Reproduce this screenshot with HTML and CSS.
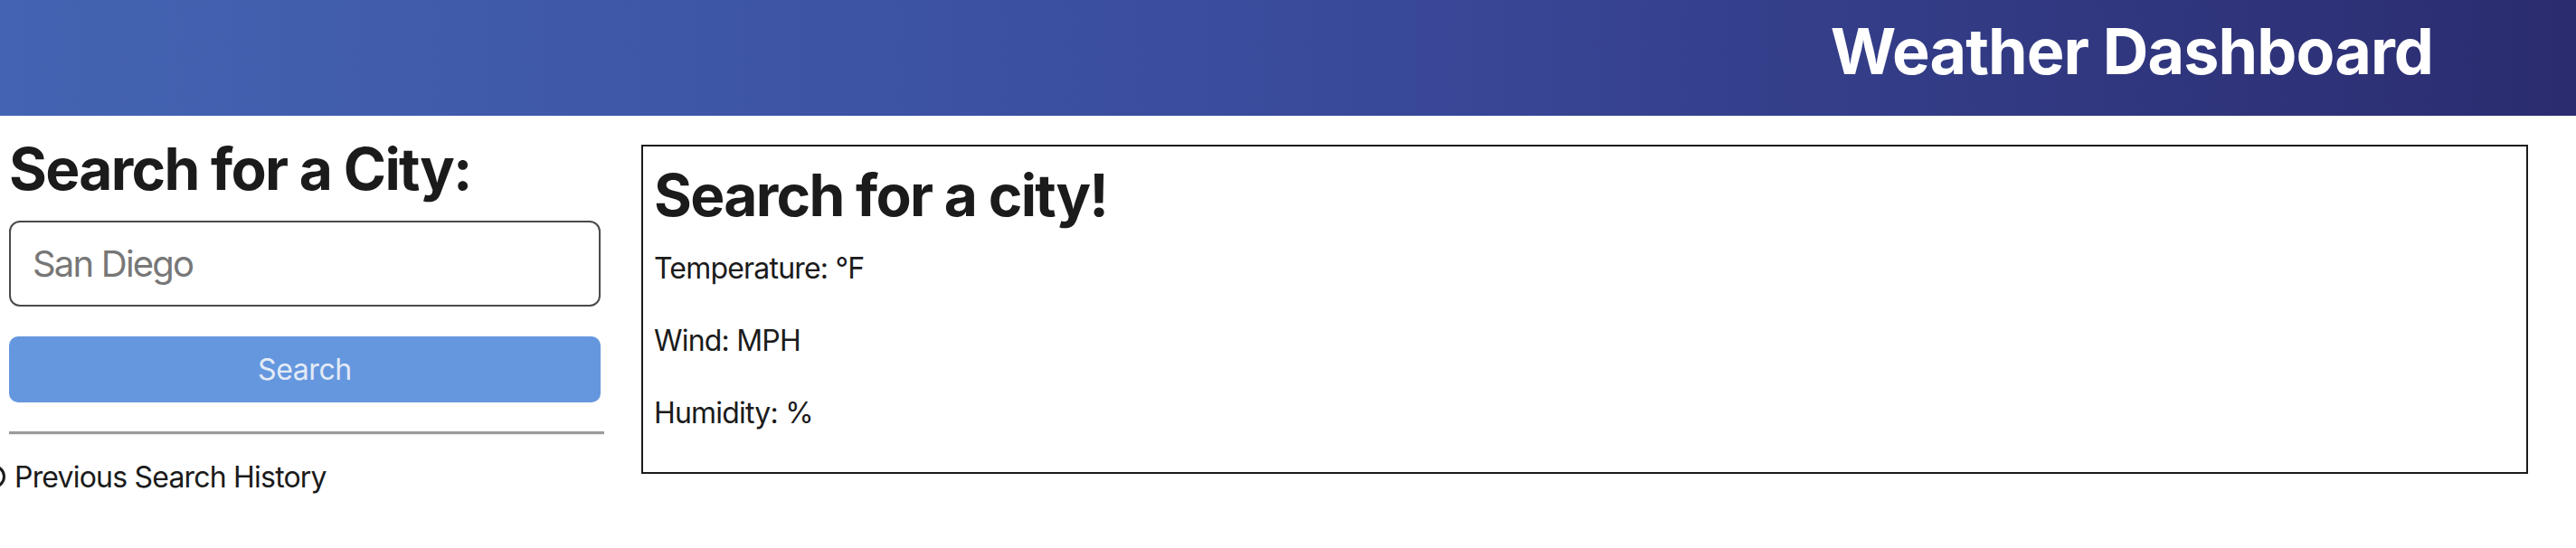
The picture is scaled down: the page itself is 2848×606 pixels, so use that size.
FILE: index.html
```html
<!DOCTYPE html>
<html lang="en">
<head>
<meta charset="utf-8">
<title>Weather Dashboard</title>
<link rel="stylesheet" href="styles.css">
</head>
<body>
<header class="site-header">
  <h1 class="site-title">Weather Dashboard</h1>
</header>
<main class="layout">
  <aside class="search-panel">
    <h2 class="search-title">Search for a City:</h2>
    <input class="city-input" type="text" placeholder="San Diego">
    <button class="search-btn" type="button">Search</button>
    <hr class="divider">
    <details class="history">
      <summary class="history-summary">Previous Search History</summary>
    </details>
  </aside>
  <section class="current-card">
    <h2 class="card-title">Search for a city!</h2>
    <p class="stat">Temperature: °F</p>
    <p class="stat">Wind: MPH</p>
    <p class="stat">Humidity: %</p>
  </section>
</main>
</body>
</html>
```
FILE: styles.css
```css
* { box-sizing: border-box; }

body {
  margin: 0;
  font-family: Inter, "Noto Sans", "Liberation Sans", sans-serif;
  color: #1b1b1b;
  background: #ffffff;
  overflow-x: hidden;
}

.site-header {
  height: 128px;
  display: flex;
  justify-content: flex-end;
  align-items: flex-start;
  padding: 14px 158px 0 0;
  background: linear-gradient(to right, #4364b2 0%, #3a4b9c 50%, #2b2c6f 100%);
}

.site-title {
  margin: 0;
  color: #ffffff;
  font-size: 70px;
  font-weight: 700;
  line-height: normal;
  letter-spacing: -0.9px;
}

.layout {
  display: flex;
  align-items: flex-start;
  padding: 0 53px 0 10px;
}

.search-panel {
  flex: none;
  width: 658px;
}

.search-title {
  margin: 20px 0 19px;
  font-size: 64px;
  font-weight: 700;
  line-height: 77px;
  letter-spacing: -1.7px;
  color: #1b1b1b;
}

.city-input {
  display: block;
  width: 654px;
  height: 95px;
  padding: 0 24px;
  border: 2px solid #4a4a4a;
  border-radius: 12px;
  font-family: inherit;
  font-size: 40px;
  letter-spacing: -1.8px;
  color: #1b1b1b;
  background: #fff;
  outline: none;
}

.city-input::placeholder {
  color: #777777;
}

.search-btn {
  display: block;
  width: 654px;
  height: 73px;
  margin-top: 33px;
  border: none;
  border-radius: 10px;
  background: #6597df;
  color: #e3ebf6;
  font-family: inherit;
  font-size: 32px;
  letter-spacing: -0.4px;
  padding: 0;
}

.divider {
  width: 658px;
  height: 0;
  margin: 32px 0 0;
  border: none;
  border-top: 3px solid #9b9b9b;
  border-bottom: 1px solid #e9e9e9;
}

.history {
  margin-top: 23px;
}

.history-summary {
  display: block;
  list-style: none;
  font-size: 32px;
  line-height: 48px;
  letter-spacing: -0.8px;
  color: #1b1b1b;
}

.history-summary::-webkit-details-marker { display: none; }

.history-summary::before {
  content: "";
  display: inline-block;
  width: 20px;
  height: 20px;
  border: 3px solid #1b1b1b;
  border-radius: 50%;
  margin-left: -30px;
  margin-right: 10px;
  vertical-align: -1px;
}

.current-card {
  flex: 1;
  margin: 32px 0 0 41px;
  border: 2px solid #1b1b1b;
  padding: 15px 12px 9px 12px;
}

.card-title {
  margin: 0 0 19px;
  font-size: 64px;
  font-weight: 700;
  line-height: 77px;
  letter-spacing: -1.7px;
  color: #1b1b1b;
}

.stat {
  margin: 0 0 32px;
  font-size: 32px;
  line-height: 48px;
  letter-spacing: -0.8px;
}
```
